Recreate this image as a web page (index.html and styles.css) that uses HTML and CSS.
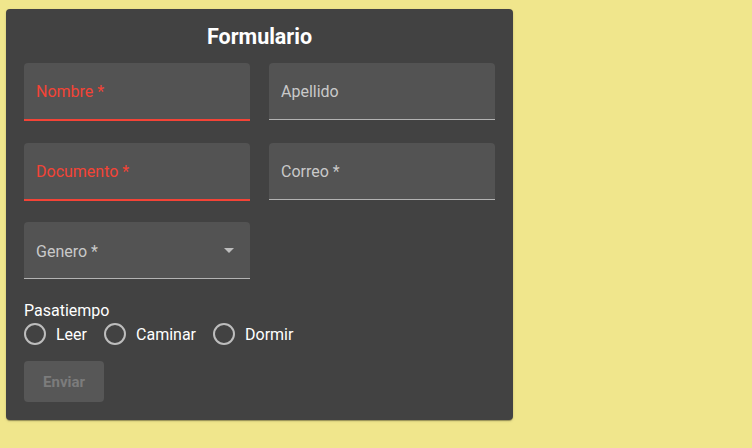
FILE: index.html
```html
<!DOCTYPE html>
<html lang="es">
<head>
<meta charset="utf-8">
<title>Formulario</title>
<link rel="stylesheet" href="styles.css">
</head>
<body>
<form class="card">
  <h1 class="title">Formulario</h1>
  <div class="grid">
    <div class="field error"><span class="label">Nombre *</span></div>
    <div class="field"><span class="label">Apellido</span></div>
    <div class="field error"><span class="label">Documento *</span></div>
    <div class="field"><span class="label">Correo *</span></div>
    <div class="field select"><span class="label">Genero *</span><span class="arrow"></span></div>
  </div>
  <div class="group-label">Pasatiempo</div>
  <div class="radios">
    <label class="radio"><span class="circle"></span><span>Leer</span></label>
    <label class="radio"><span class="circle"></span><span>Caminar</span></label>
    <label class="radio"><span class="circle"></span><span>Dormir</span></label>
  </div>
  <button type="button" class="btn" disabled>Enviar</button>
</form>
</body>
</html>
```
FILE: styles.css
```css
html, body {
  margin: 0;
  padding: 0;
}
body {
  background: #f0e68c;
  padding: 9px 6px;
  font-family: Roboto, "Liberation Sans", sans-serif;
  height: 448px;
  box-sizing: border-box;
}
.card {
  width: 507px;
  box-sizing: border-box;
  background: #424242;
  border-radius: 4px;
  box-shadow: 0 2px 1px -1px rgba(0,0,0,.2), 0 1px 1px 0 rgba(0,0,0,.14), 0 1px 3px 0 rgba(0,0,0,.12);
  padding: 14px 18px 18px;
  display: flex;
  flex-direction: column;
  align-items: flex-start;
}
.title {
  align-self: stretch;
  margin: 0 0 12px;
  text-align: center;
  color: #fff;
  font-size: 21.5px;
  line-height: 28px;
  font-weight: 700;
}
.grid {
  display: grid;
  grid-template-columns: 226px 226px;
  column-gap: 19px;
  row-gap: 21.5px;
}
.field {
  height: 56px;
  background: #535353;
  border-radius: 4px 4px 0 0;
  border-bottom: 1px solid #b3b3b3;
  margin-bottom: 1px;
  display: flex;
  align-items: center;
  padding: 0 16px 0 12px;
  box-sizing: content-box;
  width: 198px;
}
.field.error {
  border-bottom: 2px solid #f44336;
  margin-bottom: 0;
}
.label {
  font-size: 16px;
  color: #c9c9c9;
  flex: 1;
  padding-top: 1px;
}
.field.error .label {
  color: #f44336;
}
.field.select .label {
  padding-top: 2px;
}
.arrow {
  width: 0;
  height: 0;
  border-left: 5px solid transparent;
  border-right: 5px solid transparent;
  border-top: 5px solid #bdbdbd;
}
.group-label {
  margin-top: 21px;
  color: #fff;
  font-size: 16px;
  line-height: 20px;
}
.radios {
  display: flex;
  align-items: center;
  height: 26px;
  gap: 17px;
}
.radio {
  display: flex;
  align-items: center;
  gap: 10px;
  color: #fff;
  font-size: 16px;
}
.circle {
  width: 18px;
  height: 18px;
  border: 2px solid #bdbdbd;
  border-radius: 50%;
}
.btn {
  margin-top: 14px;
  width: 80px;
  height: 41px;
  border: none;
  border-radius: 4px;
  background: #575757;
  color: #7c7c7c;
  font-family: Roboto, "Liberation Sans", sans-serif;
  font-weight: 700;
  font-size: 15px;
  padding: 0;
}
```
